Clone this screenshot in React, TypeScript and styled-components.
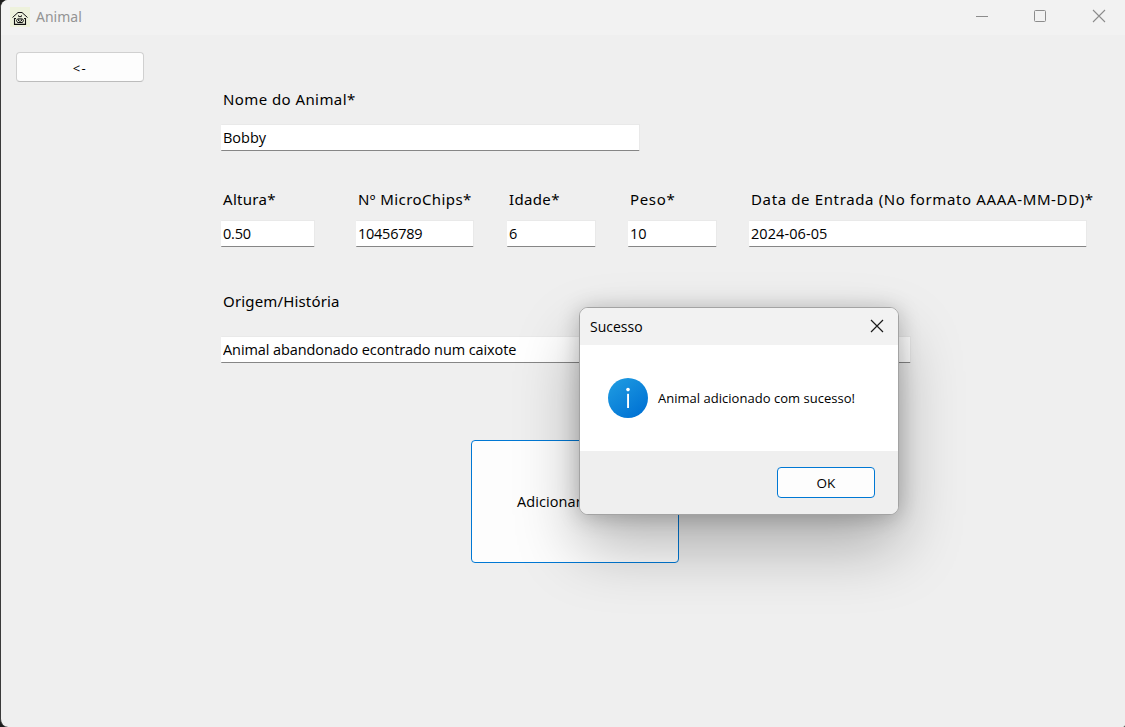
import React from 'react';
import styled, { createGlobalStyle } from 'styled-components';

const GlobalStyle = createGlobalStyle`
  * { box-sizing: border-box; }
  body { margin: 0; background: #222; overflow: hidden; }
  button, input { font: inherit; }
`;

const Desktop = styled.div`
  width: 1125px;
  height: 727px;
  background: #1c1c1c;
  position: relative;
  overflow: hidden;
  font-family: "Open Sans", sans-serif;
  color: #000;
`;

const Window = styled.div`
  height: 727px;
  display: flex;
  flex-direction: column;
  background: #efefef;
  border-left: 1px solid #3a3a3a;
  border-radius: 8px 0 2px 8px;
  overflow: hidden;
`;

const TitleBar = styled.header`
  height: 35px;
  flex: none;
  display: flex;
  align-items: center;
  justify-content: space-between;
  padding: 0 19px 2px 9px;
  background: #f2f2f2;
`;

const TitleGroup = styled.div`
  display: flex;
  align-items: center;
  gap: 6px;
`;

const TitleText = styled.span`
  font-family: "Noto Sans", sans-serif;
  font-size: 14px;
  line-height: 20px;
  color: #949494;
  letter-spacing: 0;
  padding-top: 1px;
`;

const WindowControls = styled.div`
  display: flex;
  align-items: center;
  gap: 45px;
  padding-bottom: 2px;
  svg { display: block; }
`;

const Body = styled.main`
  display: flex;
  align-items: flex-start;
  padding: 17px 0 0 15px;
`;

const BackButton = styled.button`
  width: 128px;
  height: 30px;
  flex: none;
  border: 1px solid #d0d0d0;
  border-bottom-color: #bcbcbc;
  border-radius: 4px;
  background: #fdfdfd;
  padding: 2px 0 0;
  font-size: 13px;
  color: #000;
  letter-spacing: 1.4px;
`;

const Form = styled.form`
  display: flex;
  flex-direction: column;
  padding-left: 77px;
  padding-top: 37px;
`;

const Row = styled.div<{ $top?: number }>`
  display: flex;
  margin-top: ${(p) => p.$top ?? 0}px;
`;

const FieldBox = styled.label<{ $width: number; $after?: number; $gap: number }>`
  width: ${(p) => p.$width}px;
  margin-right: ${(p) => p.$after ?? 0}px;
  display: flex;
  flex-direction: column;
  gap: ${(p) => p.$gap}px;
`;

const Caption = styled.span<{ $spacing: number }>`
  padding-left: 2px;
  font-family: "Noto Sans", sans-serif;
  font-size: 15px;
  line-height: 20px;
  white-space: nowrap;
  letter-spacing: ${(p) => p.$spacing}px;
`;

const Input = styled.input<{ $spacing: number }>`
  width: 100%;
  height: 27px;
  border: 1px solid #e9e9e9;
  border-left: 0;
  border-bottom-color: #868686;
  outline: none;
  border-radius: 1px;
  background: #fff;
  padding: 0 2px;
  font-size: 14.5px;
  color: #000;
  letter-spacing: ${(p) => p.$spacing}px;
`;

const SubmitButton = styled.button`
  width: 208px;
  height: 123px;
  margin: 77px 0 0 250px;
  border: 1px solid #0078d4;
  border-radius: 4px;
  background: #fdfdfd;
  padding: 0;
  font-size: 14.5px;
  letter-spacing: 0.08px;
  color: #000;
`;

const Dialog = styled.section`
  position: absolute;
  left: 579px;
  top: 307px;
  width: 320px;
  height: 208px;
  display: flex;
  flex-direction: column;
  border: 1px solid #a3a3a3;
  border-radius: 9px;
  background: #fff;
  overflow: hidden;
  box-shadow: 0 32px 64px rgba(0, 0, 0, 0.28), 0 2px 21px rgba(0, 0, 0, 0.22);
`;

const DialogTitle = styled.div`
  height: 37px;
  flex: none;
  display: flex;
  align-items: center;
  justify-content: space-between;
  padding: 0 14px 0 10px;
  background: #f2f2f2;
  font-size: 14px;
  letter-spacing: 0;
  svg { display: block; margin-bottom: 2px; }
`;

const DialogBody = styled.div`
  flex: 1;
  display: flex;
  align-items: center;
  gap: 10px;
  padding-left: 28px;
  font-size: 13px;
  letter-spacing: 0.02px;
  white-space: nowrap;
`;

const DialogFooter = styled.div`
  height: 63px;
  flex: none;
  display: flex;
  align-items: center;
  justify-content: flex-end;
  padding-right: 23px;
  background: #efefef;
`;

const OkButton = styled.button`
  width: 98px;
  height: 31px;
  border: 1px solid #0078d4;
  border-radius: 4px;
  background: #fdfdfd;
  padding: 0;
  font-size: 13.5px;
  color: #000;
`;

function ShelterIcon() {
  return (
    <svg width="20" height="20" viewBox="0 0 20 20">
      <rect width="20" height="20" fill="#eef2dc" />
      <g fill="none" stroke="#111" strokeWidth="1">
        <path d="M2.5 10.5 L8 5.5 H12 L17.5 10.5" />
        <path d="M6 11.5 H4.5 V17.4 H15.5 V11.5 H14" strokeWidth="1.1" />
        <path d="M8 8.8 H8.9 M11.1 8.8 H12 M8.5 9.6 H11.5" />
        <path d="M6.5 13.5 L7.5 11.9 H12.5 L13.5 13.5 L12.5 15.5 H7.5 Z" />
      </g>
      <path d="M8 12.6h1.3v1.3H8zM10.8 12.6h1.3v1.3h-1.3zM9.2 14.2h1.6v1.1H9.2z" fill="#111" />
    </svg>
  );
}

function InfoIcon() {
  return (
    <svg width="40" height="40" viewBox="0 0 40 40">
      <defs>
        <linearGradient id="info" x1="0.15" y1="0.1" x2="0.8" y2="0.95">
          <stop offset="0" stopColor="#1c98e0" />
          <stop offset="1" stopColor="#0072d4" />
        </linearGradient>
      </defs>
      <circle cx="20" cy="20" r="20" fill="url(#info)" />
      <circle cx="20" cy="11.6" r="1.8" fill="#fff" />
      <rect x="19.1" y="15.8" width="1.9" height="14.2" fill="#fff" />
    </svg>
  );
}

interface FieldProps {
  label: string;
  value: string;
  width: number;
  after?: number;
  gap?: number;
  spacing?: number;
  valueSpacing?: number;
}

function Field({ label, value, width, after, gap = 11, spacing = 0.42, valueSpacing = 0 }: FieldProps) {
  return (
    <FieldBox $width={width} $after={after} $gap={gap}>
      <Caption $spacing={spacing}>{label}</Caption>
      <Input $spacing={valueSpacing} defaultValue={value} spellCheck={false} />
    </FieldBox>
  );
}

export default function App() {
  return (
    <Desktop>
      <GlobalStyle />
      <Window>
        <TitleBar>
          <TitleGroup>
            <ShelterIcon />
            <TitleText>Animal</TitleText>
          </TitleGroup>
          <WindowControls>
            <svg width="14" height="14" viewBox="0 0 14 14"><path d="M2 7.5H14" stroke="#8c8c8c" /></svg>
            <svg width="14" height="14" viewBox="0 0 14 14"><rect x="1.5" y="1.5" width="11" height="11" rx="1" fill="none" stroke="#8c8c8c" /></svg>
            <svg width="14" height="14" viewBox="0 0 14 14"><path d="M1 1L13 13M13 1L1 13" stroke="#8c8c8c" strokeWidth="1.1" /></svg>
          </WindowControls>
        </TitleBar>
        <Body>
          <BackButton type="button">&lt;-</BackButton>
          <Form>
            <Row>
              <Field label="Nome do Animal*" value="Bobby" width={419} gap={15} />
            </Row>
            <Row $top={38}>
              <Field label="Altura*" value="0.50" width={94} after={41} spacing={0.3} valueSpacing={-0.2} />
              <Field label="Nº MicroChips*" value="10456789" width={118} after={33} valueSpacing={-0.25} />
              <Field label="Idade*" value="6" width={89} after={32} spacing={0.35} />
              <Field label="Peso*" value="10" width={89} after={32} spacing={0.65} />
              <Field label="Data de Entrada (No formato AAAA-MM-DD)*" value="2024-06-05" width={338} spacing={0.63} valueSpacing={0.08} />
            </Row>
            <Row $top={44}>
              <Field label="Origem/História" value="Animal abandonado econtrado num caixote" width={690} gap={25} spacing={0.16} valueSpacing={-0.09} />
            </Row>
            <SubmitButton type="button">Adicionar Animal</SubmitButton>
          </Form>
        </Body>
      </Window>
      <Dialog role="dialog">
        <DialogTitle>
          <span>Sucesso</span>
          <svg width="14" height="14" viewBox="0 0 14 14"><path d="M1 1L13 13M13 1L1 13" stroke="#1a1a1a" strokeWidth="1.2" /></svg>
        </DialogTitle>
        <DialogBody>
          <InfoIcon />
          <span>Animal adicionado com sucesso!</span>
        </DialogBody>
        <DialogFooter>
          <OkButton type="button">OK</OkButton>
        </DialogFooter>
      </Dialog>
    </Desktop>
  );
}
